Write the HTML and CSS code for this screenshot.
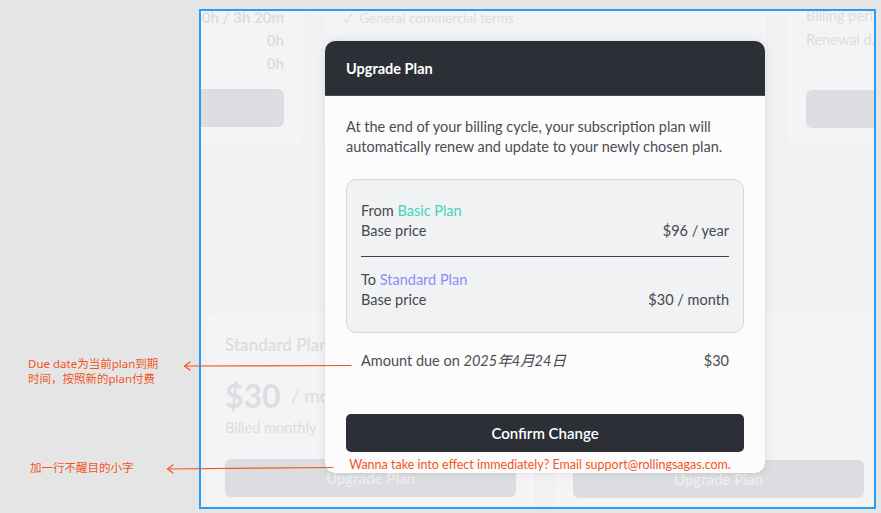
FILE: index.html
```html
<!DOCTYPE html>
<html lang="en">
<head>
<meta charset="utf-8">
<title>Upgrade Plan</title>
<link rel="stylesheet" href="styles.css">
</head>
<body>
<div class="canvas">
  <div class="note note-due">Due date为当前plan到期<br>时间，按照新的plan付费</div>
  <div class="note note-small">加一行不醒目的小字</div>

  <div class="frame">
    <div class="page">
      <div class="row-top">
        <div class="card card-usage">
          <div class="usage-line">0h / 3h 20m</div>
          <div class="usage-line">0h</div>
          <div class="usage-line">0h</div>
          <div class="ghost-btn"></div>
        </div>
        <div class="card card-features">
          <div class="feature"><span class="check">✓</span>General commercial terms</div>
        </div>
        <div class="card card-billing">
          <div class="bill-line">Billing period</div>
          <div class="bill-line">Renewal date</div>
          <div class="ghost-btn"></div>
        </div>
      </div>
      <div class="row-bottom">
        <div class="card plan-card">
          <div class="plan-title">Standard Plan</div>
          <div class="plan-price"><span class="amount">$30</span><span class="per">/ month</span></div>
          <div class="plan-bill">Billed monthly</div>
          <div class="ghost-btn wide">Upgrade Plan</div>
        </div>
        <div class="card plan-card">
          <div class="plan-spacer"></div>
          <div class="ghost-btn wide">Upgrade Plan</div>
        </div>
      </div>
    </div>
  </div>

  <div class="modal">
    <div class="modal-head">Upgrade Plan</div>
    <div class="modal-body">
      <p class="intro">At the end of your billing cycle, your subscription plan will automatically renew and update to your newly chosen plan.</p>
      <div class="compare">
        <div class="line">From <span class="basic">Basic Plan</span></div>
        <div class="line split"><span>Base price</span><span>$96 / year</span></div>
        <div class="divider"></div>
        <div class="line">To <span class="standard">Standard Plan</span></div>
        <div class="line split"><span>Base price</span><span>$30 / month</span></div>
      </div>
      <div class="due split"><span>Amount due on <em>2025年4月24日</em></span><span>$30</span></div>
      <button class="confirm">Confirm Change</button>
      <div class="fine">Wanna take into effect immediately? Email support@rollingsagas.com.</div>
    </div>
  </div>

  <svg class="arrows" width="881" height="513" viewBox="0 0 881 513">
    <g stroke="#f0561e" stroke-width="1.2" fill="none" stroke-linecap="round" stroke-linejoin="round">
      <path d="M184.5 366 L351 365.5"/>
      <path d="M190 362 L184.5 366 L190 370"/>
      <path d="M167.5 469 L333 467.5"/>
      <path d="M173 465 L167.5 469 L173 473"/>
    </g>
  </svg>
</div>
</body>
</html>
```

FILE: styles.css
```css
* { box-sizing: border-box; }
html, body { margin: 0; padding: 0; }
body {
  background: #e5e5e5;
  font-family: "Lato", "Noto Sans CJK SC", sans-serif;
  width: 881px;
  height: 513px;
  overflow: hidden;
}
.canvas {
  position: relative;
  width: 881px;
  height: 513px;
}

/* annotations */
.note {
  position: absolute;
  color: #f0561e;
  font-family: "Noto Sans", "Noto Sans CJK SC", sans-serif;
  font-size: 11.5px;
  line-height: 15px;
}
.note-due { left: 28px; top: 356px; }
.note-small { left: 30px; top: 460px; }
.arrows { position: absolute; left: 0; top: 0; pointer-events: none; }

/* the design frame */
.frame {
  position: absolute;
  left: 199px;
  top: 9px;
  width: 677px;
  height: 500px;
  border: 2px solid #2b9cf4;
  overflow: hidden;
}
.page {
  width: 100%;
  height: 100%;
  background: #f1f2f4;
  overflow: hidden;
}
.card {
  background: #f3f4f6;
  border: 1px solid #eceef0;
  border-radius: 12px;
  flex: none;
}
.row-top {
  display: flex;
  gap: 17px;
  margin-left: -200px;
  margin-top: -25px;
  height: 161px;
}
.card-usage {
  width: 304px;
  height: 161px;
  padding: 19px 20px 0 20px;
  text-align: right;
}
.usage-line {
  font-size: 15px;
  font-weight: 700;
  line-height: 23px;
  color: #dcdde0;
}
.ghost-btn {
  height: 38px;
  background: #dcdde0;
  border-radius: 6px;
  margin-top: 14px;
}
.card-usage .ghost-btn { margin-left: -30px; }
.card-features {
  width: 446px;
  height: 161px;
  padding: 21px 21px 0 21px;
}
.feature {
  font-size: 13.5px;
  line-height: 20px;
  color: #dddee1;
}
.check { color: #f2cdca; margin-right: 7px; font-size: 12px; }
.card-billing {
  width: 200px;
  height: 161px;
  padding: 17px 0 0 20px;
}
.bill-line {
  font-size: 14.5px;
  line-height: 24px;
  color: #dcdde0;
  white-space: nowrap;
}
.card-billing .ghost-btn { margin-top: 38px; }

.row-bottom {
  display: flex;
  gap: 17px;
  margin-top: 164px;
  margin-left: 4px;
}
.plan-card {
  width: 331px;
  height: 240px;
  padding: 21px 19px 0 19px;
}
.plan-spacer { height: 106px; }
.plan-title {
  font-size: 17px;
  font-weight: 600;
  line-height: 24px;
  color: #dcdde0;
}
.plan-price {
  margin-top: 18px;
  height: 40px;
  display: flex;
  align-items: center;
  gap: 10px;
  color: #dcdde0;
}
.amount { font-size: 32px; font-weight: 700; }
.per { font-size: 19px; }
.plan-bill {
  margin-top: 3px;
  font-size: 14.5px;
  line-height: 20px;
  color: #dcdde0;
}
.ghost-btn.wide {
  margin-top: 21px;
  color: #eceef0;
  font-size: 15px;
  font-weight: 600;
  display: flex;
  align-items: center;
  justify-content: center;
}

/* modal */
.modal {
  position: absolute;
  left: 325px;
  top: 41px;
  width: 440px;
  height: 432px;
  background: #fcfcfc;
  border-radius: 10px;
  box-shadow: 0 0 10px rgba(0, 0, 0, 0.10), 0 0 2px rgba(0, 0, 0, 0.06);
  overflow: hidden;
}
.modal-head {
  height: 55px;
  background: #2c2f36;
  color: #ffffff;
  font-size: 14.5px;
  font-weight: 700;
  display: flex;
  align-items: center;
  padding-left: 21px;
  border-bottom: 1px solid #4a4d55;
}
.modal-body {
  padding: 21px 21px 0 21px;
  color: #4a4d55;
  font-size: 14.5px;
}
.intro {
  margin: 0;
  line-height: 20px;
}
.compare {
  margin-top: 22px;
  background: #f1f2f4;
  border: 1px solid #d6d8dc;
  border-radius: 10px;
  padding: 21px 14px 22px 14px;
  color: #45484f;
}
.line { line-height: 20px; }
.split { display: flex; justify-content: space-between; }
.basic { color: #3dd8b7; }
.standard { color: #8a8ef7; }
.divider {
  height: 1px;
  background: #3d4150;
  margin: 15px 0 13px;
}
.due {
  margin-top: 18px;
  padding: 0 15px;
  line-height: 20px;
  color: #4a4d55;
}
.due em { font-style: italic; }
.confirm {
  display: block;
  width: 100%;
  height: 38px;
  margin-top: 43px;
  border: none;
  border-radius: 5px;
  background: #2c2f36;
  color: #ffffff;
  font-family: inherit;
  font-size: 15px;
  font-weight: 600;
}
.fine {
  margin-top: 6px;
  padding-right: 10px;
  text-align: center;
  color: #f0561e;
  font-size: 12.5px;
  line-height: 14px;
  white-space: nowrap;
}
```
